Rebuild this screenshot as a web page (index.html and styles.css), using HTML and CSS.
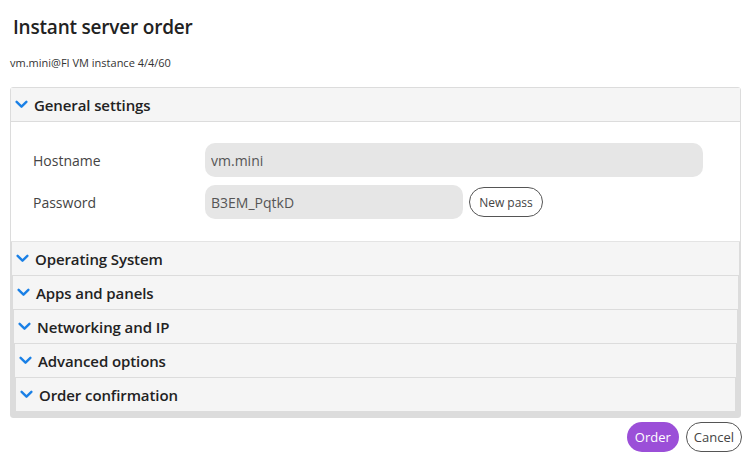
FILE: index.html
```html
<!doctype html>
<html lang="en">
  <head>
    <meta charset="UTF-8" />
    <meta name="viewport" content="width=device-width, initial-scale=1.0" />
    <title>Instant server order</title>
    <link rel="stylesheet" href="styles.css">
  </head>

  <body>
    <div class="dialog">
      <h1>Instant server order</h1>
      <div class="subtitle">vm.mini@FI VM instance 4/4/60</div>

      <div class="panel">
        <div class="panel-head">
          <svg class="chev" viewBox="0 0 12 8"><path d="M1.5 1.5 6 6l4.5-4.5" /></svg>
          General settings
        </div>
        <div class="panel-body">
          <div class="row">
            <label for="hostname">Hostname</label>
            <input type="text" id="hostname" class="field" value="vm.mini" />
          </div>
          <div class="row">
            <label for="password">Password</label>
            <input type="text" id="password" class="field short" value="B3EM_PqtkD" />
            <button class="btn-outline small">New pass</button>
          </div>
        </div>

        <div class="panel">
          <div class="panel-head">
            <svg class="chev" viewBox="0 0 12 8"><path d="M1.5 1.5 6 6l4.5-4.5" /></svg>
            Operating System
          </div>
          <div class="panel">
            <div class="panel-head">
              <svg class="chev" viewBox="0 0 12 8"><path d="M1.5 1.5 6 6l4.5-4.5" /></svg>
              Apps and panels
            </div>
            <div class="panel">
              <div class="panel-head">
                <svg class="chev" viewBox="0 0 12 8"><path d="M1.5 1.5 6 6l4.5-4.5" /></svg>
                Networking and IP
              </div>
              <div class="panel">
                <div class="panel-head">
                  <svg class="chev" viewBox="0 0 12 8"><path d="M1.5 1.5 6 6l4.5-4.5" /></svg>
                  Advanced options
                </div>
                <div class="panel">
                  <div class="panel-head">
                    <svg class="chev" viewBox="0 0 12 8"><path d="M1.5 1.5 6 6l4.5-4.5" /></svg>
                    Order confirmation
                  </div>
                </div>
              </div>
            </div>
          </div>
        </div>
      </div>

      <div class="actions">
        <button class="btn-primary">Order</button>
        <button class="btn-outline">Cancel</button>
      </div>
    </div>
  </body>
</html>
```

FILE: styles.css
```css
body {
  margin: 0;
  font-family: "Open Sans", "Noto Sans", Arial, sans-serif;
  background-color: #fff;
  color: #333;
}

.dialog {
  padding: 0 9px 0 10px;
}

h1 {
  margin: 0;
  padding: 14px 0 0 3px;
  height: 29px;
  font-size: 19px;
  font-weight: 600;
  color: #222;
  letter-spacing: -0.2px;
}

.subtitle {
  margin: 12px 0 0 0;
  height: 32px;
  font-size: 11px;
  color: #333;
}

.panel {
  border: 1px solid #dcdcdc;
  border-top: none;
  background-color: #fff;
}

.dialog > .panel {
  border-top: 1px solid #dcdcdc;
  border-radius: 3px;
}

.panel-head {
  display: flex;
  align-items: center;
  gap: 6px;
  height: 33px;
  padding-left: 4px;
  background-color: #f5f5f5;
  border-bottom: 1px solid #dcdcdc;
  font-size: 15px;
  font-weight: 600;
  color: #222;
  letter-spacing: -0.1px;
}

.chev {
  width: 13px;
  height: 9px;
  fill: none;
  stroke: #1a80e6;
  stroke-width: 2.2;
  stroke-linecap: round;
  stroke-linejoin: round;
}

.panel-body {
  padding: 21px 0 22px 22px;
  display: flex;
  flex-direction: column;
  gap: 8px;
  border-bottom: 1px solid #e4e4e4;
}

.row {
  display: flex;
  align-items: center;
  gap: 6px;
}

label {
  width: 166px;
  font-size: 14px;
  color: #444;
}

.field {
  box-sizing: border-box;
  width: 498px;
  height: 34px;
  padding: 0 6px;
  border: none;
  border-radius: 10px;
  background-color: #e6e6e6;
  font-family: inherit;
  font-size: 14px;
  color: #555;
}

.field.short {
  width: 258px;
}

.btn-outline {
  height: 30px;
  padding: 0 7px;
  border: 1px solid #555;
  border-radius: 15px;
  background: #fff;
  font-family: inherit;
  font-size: 13px;
  color: #444;
}

.btn-outline.small {
  font-size: 12px;
  padding: 0 9px;
  width: 74px;
}

.actions {
  display: flex;
  justify-content: flex-end;
  gap: 7px;
  margin-top: 4px;
  margin-right: -1px;
}

.btn-primary {
  height: 30px;
  padding: 0 8px;
  border: none;
  border-radius: 15px;
  background-color: #9b4fd8;
  color: #fff;
  font-family: inherit;
  font-size: 13px;
}
```
